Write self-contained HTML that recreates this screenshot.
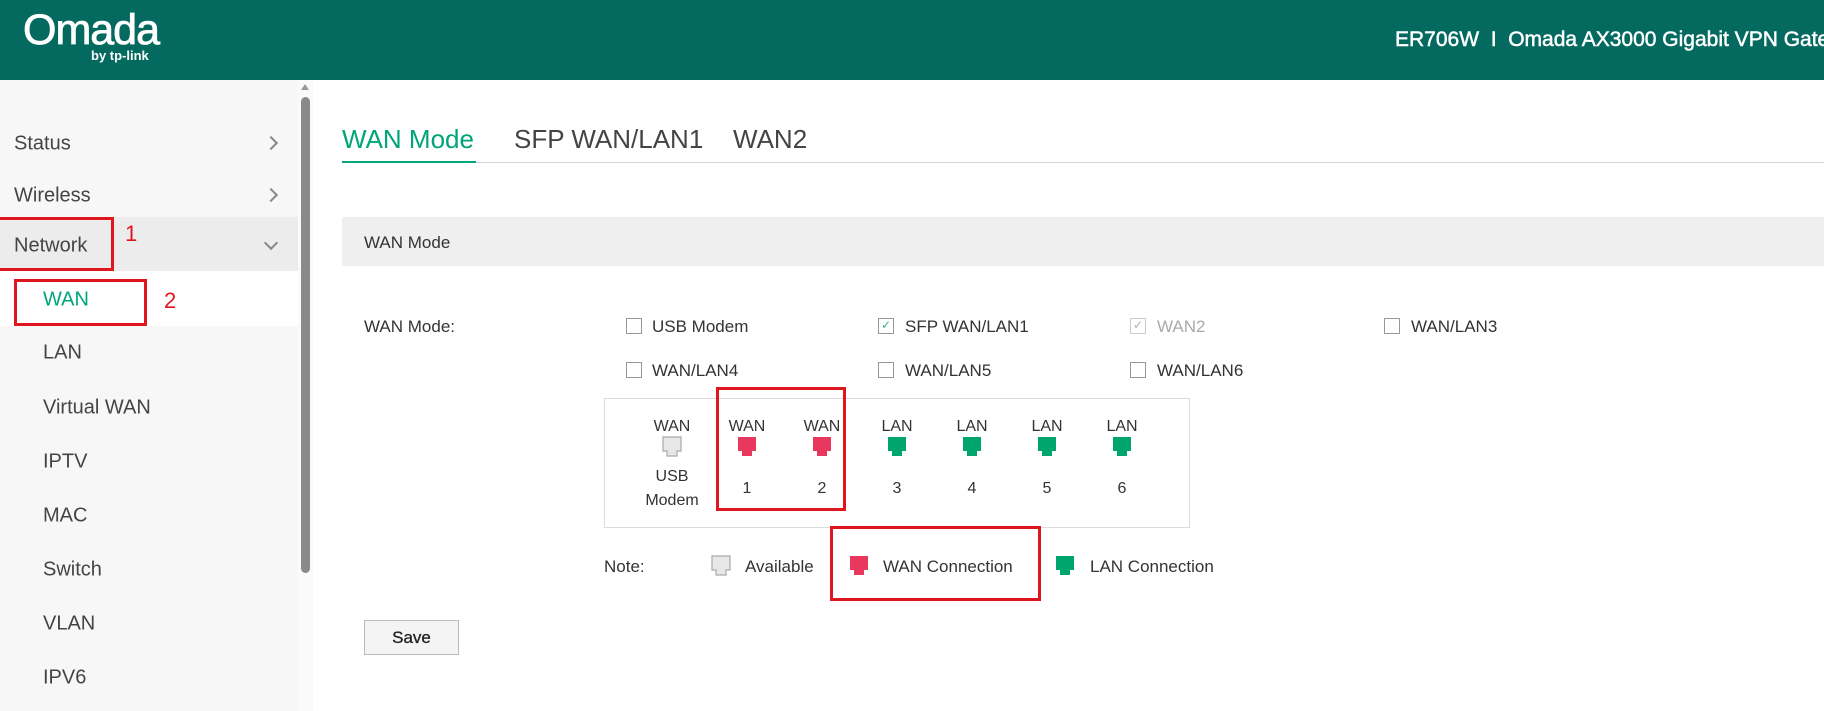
<!DOCTYPE html>
<html><head><meta charset="utf-8"><style>
*{margin:0;padding:0;box-sizing:border-box}
body{width:1824px;height:711px;overflow:hidden;background:#fff;font-family:"Liberation Sans",sans-serif;color:#333;position:relative}
.a{position:absolute;white-space:nowrap}
.hdr{position:absolute;left:0;top:0;width:1824px;height:80px;background:#046a5f}
.side{position:absolute;left:0;top:80px;width:298px;height:631px;background:#f7f7f7}
.si{position:absolute;font-size:20px;color:#444;transform:translateY(-50%)}
.chev{position:absolute;left:266px;width:10px;height:10px;border-right:2px solid #888;border-bottom:2px solid #888}
.cb{position:absolute;width:16px;height:16px;border:1.5px solid #999;background:#fff}
.lbl{font-size:17px;transform:translateY(-50%)}
.red{position:absolute;border:3px solid #e0161e}
.port{position:absolute;width:20px;height:22px}
.pl{position:absolute;font-size:16px;text-align:center;width:60px;transform:translate(-50%,-50%)}
</style></head><body>
<div class="hdr"></div>
<div class="a" style="left:23px;top:6px;font-size:43px;color:#fff;letter-spacing:-1px;-webkit-text-stroke:0.8px #fff">Omada</div>
<div class="a" style="left:91px;top:48px;font-size:13px;font-weight:bold;color:#fff">by tp-link</div>
<div class="a" style="left:1395px;top:28px;font-size:21px;color:#fff;-webkit-text-stroke:0.5px #fff">ER706W &nbsp;I&nbsp; Omada AX3000 Gigabit VPN Gateway</div>

<div class="side"></div>
<div class="a" style="left:0;top:217px;width:298px;height:54px;background:#ececec"></div>
<div class="a" style="left:0;top:271px;width:298px;height:55px;background:#fff"></div>
<div class="a" style="left:298px;top:80px;width:15px;height:631px;background:#fafafa"></div>
<div class="a" style="left:301px;top:84px;width:0;height:0;border-left:4px solid transparent;border-right:4px solid transparent;border-bottom:6px solid #999"></div>
<div class="a" style="left:301px;top:97px;width:9px;height:476px;background:#8a8a8a;border-radius:5px"></div>

<div class="si" style="left:14px;top:144px">Status</div><div class="chev" style="top:138px;transform:rotate(-45deg)"></div>
<div class="si" style="left:14px;top:196px">Wireless</div><div class="chev" style="top:190px;transform:rotate(-45deg)"></div>
<div class="si" style="left:14px;top:246px">Network</div><div class="chev" style="top:238px;transform:rotate(45deg)"></div>
<div class="si" style="left:43px;top:300px;color:#00a57a">WAN</div>
<div class="si" style="left:43px;top:353px">LAN</div>
<div class="si" style="left:43px;top:408px">Virtual WAN</div>
<div class="si" style="left:43px;top:462px">IPTV</div>
<div class="si" style="left:43px;top:516px">MAC</div>
<div class="si" style="left:43px;top:570px">Switch</div>
<div class="si" style="left:43px;top:624px">VLAN</div>
<div class="si" style="left:43px;top:678px">IPV6</div>
<div class="red" style="left:-3px;top:217px;width:117px;height:54px"></div>
<div class="a" style="left:125px;top:221px;font-size:22px;color:#e0161e">1</div>
<div class="red" style="left:14px;top:279px;width:133px;height:47px"></div>
<div class="a" style="left:164px;top:288px;font-size:22px;color:#e0161e">2</div>

<div class="a" style="left:342px;top:124px;font-size:26px;color:#00a57a">WAN Mode</div>
<div class="a" style="left:514px;top:124px;font-size:26px;color:#444">SFP WAN/LAN1</div>
<div class="a" style="left:733px;top:124px;font-size:26px;color:#444">WAN2</div>
<div class="a" style="left:342px;top:162px;width:1482px;height:1px;background:#d6d6d6"></div>
<div class="a" style="left:342px;top:161px;width:134px;height:2px;background:#00a57a"></div>

<div class="a" style="left:342px;top:217px;width:1482px;height:49px;background:#efefef"></div>
<div class="a" style="left:364px;top:233px;font-size:17px">WAN Mode</div>
<div class="a lbl" style="left:364px;top:327px">WAN Mode:</div>

<div class="cb" style="left:626px;top:318px"></div><div class="a lbl" style="left:652px;top:327px">USB Modem</div>
<div class="cb" style="left:878px;top:318px;color:#3bb58a;font-size:12px;line-height:13px;text-align:center">✓</div><div class="a lbl" style="left:905px;top:327px">SFP WAN/LAN1</div>
<div class="cb" style="left:1130px;top:318px;color:#aaa;font-size:12px;line-height:13px;text-align:center;border-color:#ccc">✓</div><div class="a lbl" style="left:1157px;top:327px;color:#aaa">WAN2</div>
<div class="cb" style="left:1384px;top:318px"></div><div class="a lbl" style="left:1411px;top:327px">WAN/LAN3</div>
<div class="cb" style="left:626px;top:362px"></div><div class="a lbl" style="left:652px;top:371px">WAN/LAN4</div>
<div class="cb" style="left:878px;top:362px"></div><div class="a lbl" style="left:905px;top:371px">WAN/LAN5</div>
<div class="cb" style="left:1130px;top:362px"></div><div class="a lbl" style="left:1157px;top:371px">WAN/LAN6</div>

<div class="a" style="left:604px;top:398px;width:586px;height:130px;border:1px solid #dcdcdc"></div>
<svg width="0" height="0" style="position:absolute"><defs><path id="pp" d="M1 1H19V15H15V20H5V15H1Z"/></defs></svg>

<div class="pl" style="left:672px;top:427px">WAN</div>
<svg class="port" style="left:662px;top:436px"><use href="#pp" fill="#e6e7e8" stroke="#aaa" stroke-width="1.2"/></svg>
<div class="pl" style="left:672px;top:477px">USB</div><div class="pl" style="left:672px;top:501px">Modem</div>

<div class="pl" style="left:747px;top:427px">WAN</div><svg class="port" style="left:737px;top:436px"><use href="#pp" fill="#e9385e"/></svg><div class="pl" style="left:747px;top:489px">1</div>
<div class="pl" style="left:822px;top:427px">WAN</div><svg class="port" style="left:812px;top:436px"><use href="#pp" fill="#e9385e"/></svg><div class="pl" style="left:822px;top:489px">2</div>
<div class="pl" style="left:897px;top:427px">LAN</div><svg class="port" style="left:887px;top:436px"><use href="#pp" fill="#00a56e"/></svg><div class="pl" style="left:897px;top:489px">3</div>
<div class="pl" style="left:972px;top:427px">LAN</div><svg class="port" style="left:962px;top:436px"><use href="#pp" fill="#00a56e"/></svg><div class="pl" style="left:972px;top:489px">4</div>
<div class="pl" style="left:1047px;top:427px">LAN</div><svg class="port" style="left:1037px;top:436px"><use href="#pp" fill="#00a56e"/></svg><div class="pl" style="left:1047px;top:489px">5</div>
<div class="pl" style="left:1122px;top:427px">LAN</div><svg class="port" style="left:1112px;top:436px"><use href="#pp" fill="#00a56e"/></svg><div class="pl" style="left:1122px;top:489px">6</div>
<div class="red" style="left:716px;top:387px;width:130px;height:124px"></div>

<div class="a lbl" style="left:604px;top:567px">Note:</div>
<svg class="port" style="left:711px;top:555px"><use href="#pp" fill="#e6e7e8" stroke="#aaa" stroke-width="1.2"/></svg>
<div class="a lbl" style="left:745px;top:567px">Available</div>
<svg class="port" style="left:849px;top:555px"><use href="#pp" fill="#e9385e"/></svg>
<div class="a lbl" style="left:883px;top:567px">WAN Connection</div>
<svg class="port" style="left:1055px;top:555px"><use href="#pp" fill="#00a56e"/></svg>
<div class="a lbl" style="left:1090px;top:567px">LAN Connection</div>
<div class="red" style="left:830px;top:526px;width:211px;height:75px"></div>

<div class="a" style="left:364px;top:620px;width:95px;height:35px;border:1px solid #bbb;background:#f4f4f4;font-size:17px;text-align:center;line-height:33px;color:#222;-webkit-text-stroke:0.3px #222">Save</div>
</body></html>
